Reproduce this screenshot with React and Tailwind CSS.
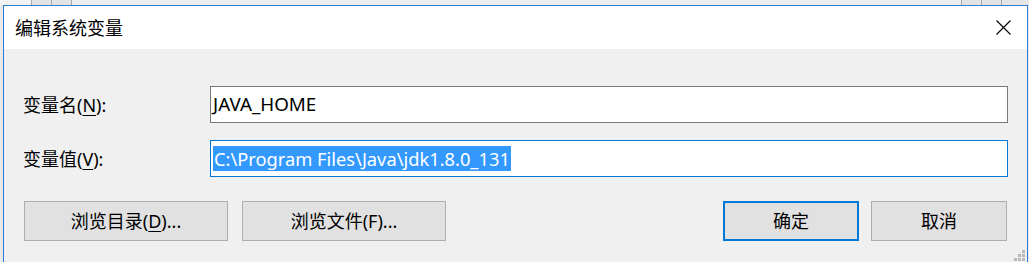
export default function App() {
  return (
    <div className="w-[1029px] h-[262px] overflow-hidden bg-[#e9e9e9] font-['Noto_Sans','Noto_Sans_CJK_SC',sans-serif] text-black">
      {/* window behind */}
      <div className="h-[5px] flex">
        <div className="w-[32px] bg-[#f3f3f3] border-r border-[#a9a9a9]" />
        <div className="w-[20px] bg-[#e3e3e3] border-r border-[#a9a9a9]" />
        <div className="w-[20px] bg-[#e3e3e3] border-r border-[#a9a9a9]" />
        <div className="flex-1 bg-[#eeeeee] border-r border-[#a9a9a9]" />
        <div className="w-[20px] bg-[#e3e3e3] border-r border-[#a9a9a9]" />
        <div className="w-[20px] bg-[#e3e3e3] border-r border-[#a9a9a9]" />
        <div className="w-[27px] bg-[#e6e6e6]" />
      </div>
      <div className="flex">
        <div className="w-[3px] h-[257px] bg-[#e9e9e9]" />
        <div className="w-[1025px] h-[257px] border-x border-t border-[#2b7bd3] flex flex-col">
          {/* title bar */}
          <div className="h-[43px] bg-white flex items-center justify-between pl-[11px] pr-[16px]">
            <span className="text-[18px] leading-none">编辑系统变量</span>
            <svg width="15" height="15" viewBox="0 0 15 15" className="block">
              <path d="M0.5 0.5 L14.5 14.5 M14.5 0.5 L0.5 14.5" stroke="#000" strokeWidth="1.1" fill="none" />
            </svg>
          </div>
          {/* body */}
          <div className="relative flex-1 bg-[#f0f0f0] pt-[37px] pl-[19px] pr-[19px]">
            <div className="flex items-center h-[37px]">
              <div className="w-[187px] text-[18px] leading-none">
                变量名(<span className="underline underline-offset-[3px]">N</span>):
              </div>
              <div className="flex-1 h-[37px] border border-[#7a7a7a] bg-white pl-[2px] flex items-center text-[18.8px] leading-none">
                JAVA_HOME
              </div>
            </div>
            <div className="flex items-center h-[37px] mt-[17px]">
              <div className="w-[187px] text-[18px] leading-none">
                变量值(<span className="underline underline-offset-[3px]">V</span>):
              </div>
              <div className="flex-1 h-[37px] border border-[#0078d7] bg-white pl-[2px] flex items-center text-[18.3px]">
                <span className="inline-block h-[25px] leading-[25px] bg-[#3399ff] text-white pl-px pr-px">
                  C:\Program Files\Java\jdk1.8.0_131
                </span>
              </div>
            </div>
            <div className="flex h-[40px] mt-[24px] ml-[1px] mr-[1px] text-[18px]">
              <button className="w-[204px] h-[40px] border border-[#adadad] bg-[#e1e1e1] flex items-center justify-center leading-none">
                浏览目录(<span className="underline underline-offset-[3px]">D</span>)...
              </button>
              <button className="w-[204px] h-[40px] ml-[14px] border border-[#adadad] bg-[#e1e1e1] flex items-center justify-center leading-none">
                浏览文件(F)...
              </button>
              <div className="flex-1" />
              <button className="w-[136px] h-[40px] border-2 border-[#0078d7] bg-[#e1e1e1] flex items-center justify-center leading-none">
                确定
              </button>
              <button className="w-[136px] h-[40px] ml-[12px] border border-[#adadad] bg-[#e1e1e1] flex items-center justify-center leading-none">
                取消
              </button>
            </div>
            {/* resize grip */}
            <div className="absolute right-[2px] bottom-[1px] grid grid-cols-3 gap-[1px]">
              <div className="w-[3px] h-[3px]" />
              <div className="w-[3px] h-[3px]" />
              <div className="w-[3px] h-[3px] bg-[#b9b9b9]" />
              <div className="w-[3px] h-[3px]" />
              <div className="w-[3px] h-[3px] bg-[#b9b9b9]" />
              <div className="w-[3px] h-[3px] bg-[#b9b9b9]" />
              <div className="w-[3px] h-[3px] bg-[#b9b9b9]" />
              <div className="w-[3px] h-[3px] bg-[#b9b9b9]" />
              <div className="w-[3px] h-[3px] bg-[#b9b9b9]" />
            </div>
          </div>
        </div>
        <div className="flex-1 bg-[#e9e9e9]" />
      </div>
    </div>
  );
}
